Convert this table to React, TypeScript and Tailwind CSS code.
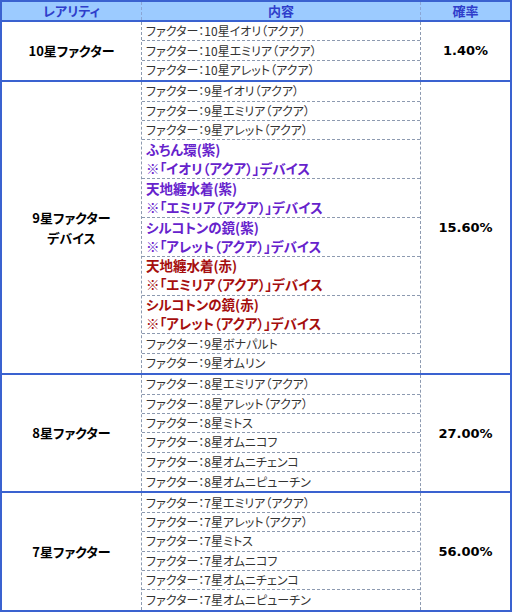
/**
 * Gacha rate table
 *
 * Rarity / contents / probability listing.
 */

type Item = {
  lines: string[];
  tone?: 'purple' | 'red';
};

type Section = {
  rarity: string[];
  rate: string;
  items: Item[];
};

const plain = (text: string): Item => ({ lines: [text] });

const sections: Section[] = [
  {
    rarity: ['10星ファクター'],
    rate: '1.40%',
    items: [
      plain('ファクター：10星イオリ（アクア）'),
      plain('ファクター：10星エミリア（アクア）'),
      plain('ファクター：10星アレット（アクア）'),
    ],
  },
  {
    rarity: ['9星ファクター', 'デバイス'],
    rate: '15.60%',
    items: [
      plain('ファクター：9星イオリ（アクア）'),
      plain('ファクター：9星エミリア（アクア）'),
      plain('ファクター：9星アレット（アクア）'),
      { lines: ['ふちん環(紫)', '※「イオリ（アクア）」デバイス'], tone: 'purple' },
      { lines: ['天地纏水着(紫)', '※「エミリア（アクア）」デバイス'], tone: 'purple' },
      { lines: ['シルコトンの鏡(紫)', '※「アレット（アクア）」デバイス'], tone: 'purple' },
      { lines: ['天地纏水着(赤)', '※「エミリア（アクア）」デバイス'], tone: 'red' },
      { lines: ['シルコトンの鏡(赤)', '※「アレット（アクア）」デバイス'], tone: 'red' },
      plain('ファクター：9星ボナパルト'),
      plain('ファクター：9星オムリン'),
    ],
  },
  {
    rarity: ['8星ファクター'],
    rate: '27.00%',
    items: [
      plain('ファクター：8星エミリア（アクア）'),
      plain('ファクター：8星アレット（アクア）'),
      plain('ファクター：8星ミトス'),
      plain('ファクター：8星オムニコフ'),
      plain('ファクター：8星オムニチェンコ'),
      plain('ファクター：8星オムニピューチン'),
    ],
  },
  {
    rarity: ['7星ファクター'],
    rate: '56.00%',
    items: [
      plain('ファクター：7星エミリア（アクア）'),
      plain('ファクター：7星アレット（アクア）'),
      plain('ファクター：7星ミトス'),
      plain('ファクター：7星オムニコフ'),
      plain('ファクター：7星オムニチェンコ'),
      plain('ファクター：7星オムニピューチン'),
    ],
  },
];

const jp = "font-['Noto_Sans_CJK_JP','Noto_Sans',sans-serif]";

function ItemRow({ item }: { item: Item }) {
  const toneClass =
    item.tone === 'purple'
      ? 'text-[#6622cc] font-bold text-[13.5px]'
      : item.tone === 'red'
        ? 'text-[#a50e0e] font-bold text-[13.5px]'
        : 'text-[#333333] text-[12px]';
  const height = item.lines.length > 1 ? 'h-[38.8px]' : 'h-[19.4px]';

  return (
    <div className={`${height} flex flex-col border-b border-dashed border-[#8d9ab0] last:border-b-0`}>
      {item.lines.map((line) => (
        <div
          key={line}
          className={`flex-1 pl-1 flex items-center whitespace-nowrap leading-none [font-feature-settings:'palt'] ${toneClass}`}
        >
          {line}
        </div>
      ))}
    </div>
  );
}

export default function App() {
  return (
    <div className={`w-[512px] h-[612px] bg-white border-2 border-[#3a62d0] flex flex-col ${jp}`}>
      {/* header */}
      <div className="flex h-[20px] shrink-0 bg-[#9ccbff] border-b-2 border-[#3a62d0] text-[#2f3ecb] font-bold text-[13px] [font-feature-settings:'palt']">
        <div className="w-[140px] flex items-center justify-center border-r border-dashed border-[#8aa6d6]">
          レアリティ
        </div>
        <div className="w-[279px] flex items-center justify-center border-r border-dashed border-[#8aa6d6]">
          内容
        </div>
        <div className="flex-1 flex items-center justify-center">確率</div>
      </div>

      {sections.map((section, i) => (
        <div
          key={section.rate}
          className={`flex shrink-0 ${i < sections.length - 1 ? 'border-b-2 border-[#3a62d0]' : ''}`}
        >
          <div className="w-[140px] flex flex-col items-center justify-center border-r border-dashed border-[#8d9ab0] text-[13px] font-bold text-black leading-[20px] [font-feature-settings:'palt']">
            {section.rarity.map((r) => (
              <span key={r}>{r}</span>
            ))}
          </div>
          <div className="w-[279px] flex flex-col border-r border-dashed border-[#8d9ab0]">
            {section.items.map((item) => (
              <ItemRow key={item.lines.join('|')} item={item} />
            ))}
          </div>
          <div className="flex-1 flex items-center justify-center font-['DejaVu_Sans',sans-serif] font-bold text-[13px] text-black">
            {section.rate}
          </div>
        </div>
      ))}
    </div>
  );
}
